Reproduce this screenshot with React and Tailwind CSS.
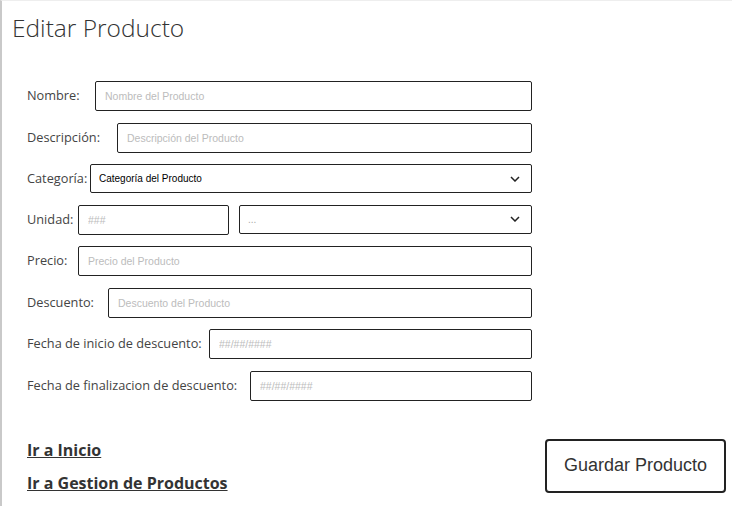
const FIELDS = [
  { label: "Nombre:", w: "w-[68px]", placeholder: "Nombre del Producto" },
  { label: "Descripción:", w: "w-[90px]", placeholder: "Descripción del Producto" },
  { label: "Categoría:", w: "w-[63px]", select: "Categoría del Producto" },
  { label: "Unidad:", w: "w-[51px]", unit: true },
  { label: "Precio:", w: "w-[51px]", placeholder: "Precio del Producto" },
  { label: "Descuento:", w: "w-[81px]", placeholder: "Descuento del Producto" },
  { label: "Fecha de inicio de descuento:", w: "w-[182px]", placeholder: "##/##/####" },
  { label: "Fecha de finalizacion de descuento:", w: "w-[223px]", placeholder: "##/##/####" },
];

function Chevron() {
  return (
    <svg width="10" height="6" viewBox="0 0 10 6" fill="none" stroke="#222" strokeWidth="1.5" className="pointer-events-none absolute right-[12px] top-1/2 -translate-y-1/2">
      <polyline points="1,1 5,5 9,1" />
    </svg>
  );
}

function SelectBox({ text, muted }) {
  return (
    <div className="relative flex-1 h-[29px]">
      <select
        className={`appearance-none w-full h-full border border-[#222] rounded-[2px] bg-white pl-[8px] text-[10px] outline-none ${
          muted ? "text-[#aaa]" : "text-black"
        }`}
        style={{ fontFamily: "'Liberation Sans', Arial, sans-serif" }}
      >
        <option>{text}</option>
      </select>
      <Chevron />
    </div>
  );
}

function TextBox({ placeholder, className = "flex-1" }) {
  return (
    <input
      placeholder={placeholder}
      className={`${className} h-[30px] border border-[#222] rounded-[2px] bg-white px-[9px] text-[10.5px] outline-none placeholder:text-[#bcbcbc]`}
      style={{ fontFamily: "'Liberation Sans', Arial, sans-serif" }}
    />
  );
}

export default function App() {
  return (
    <div
      className="w-[732px] h-[506px] bg-white border-l-2 border-l-[#c9c9c9] border-t border-t-[#eeeeee] text-[#333] overflow-hidden"
      style={{ fontFamily: "'Open Sans', sans-serif" }}
    >
      <h1 className="pl-[10px] pt-[10px] text-[24.5px] font-light leading-[34px] text-[#333]">Editar Producto</h1>

      <div className="mt-[36px] pl-[25px] w-[530px] flex flex-col gap-[11.5px]">
        {FIELDS.map((f) => (
          <div key={f.label} className="flex items-center">
            <span className={`${f.w} shrink-0 text-[12.75px] text-[#444]`}>{f.label}</span>
            {f.select && <SelectBox text={f.select} />}
            {f.unit && (
              <div className="flex-1 flex gap-[10px]">
                <TextBox placeholder="###" className="w-[151px] h-[29px]" />
                <SelectBox text="..." muted />
              </div>
            )}
            {f.placeholder && <TextBox placeholder={f.placeholder} />}
          </div>
        ))}
      </div>

      <div className="mt-[37px] pl-[25px] pr-[6px] flex items-center justify-between">
        <div className="flex flex-col gap-[11px] pt-[1px]">
          <a className="text-[16px] font-bold underline leading-[22px] text-[#333]">Ir a Inicio</a>
          <a className="text-[16px] font-bold underline leading-[22px] text-[#333]">Ir a Gestion de Productos</a>
        </div>
        <button
          className="w-[181px] h-[54px] border-2 border-[#222] rounded-[4px] bg-white text-[18px] text-[#333]"
          style={{ fontFamily: "'Liberation Sans', Arial, sans-serif" }}
        >
          Guardar Producto
        </button>
      </div>
    </div>
  );
}
